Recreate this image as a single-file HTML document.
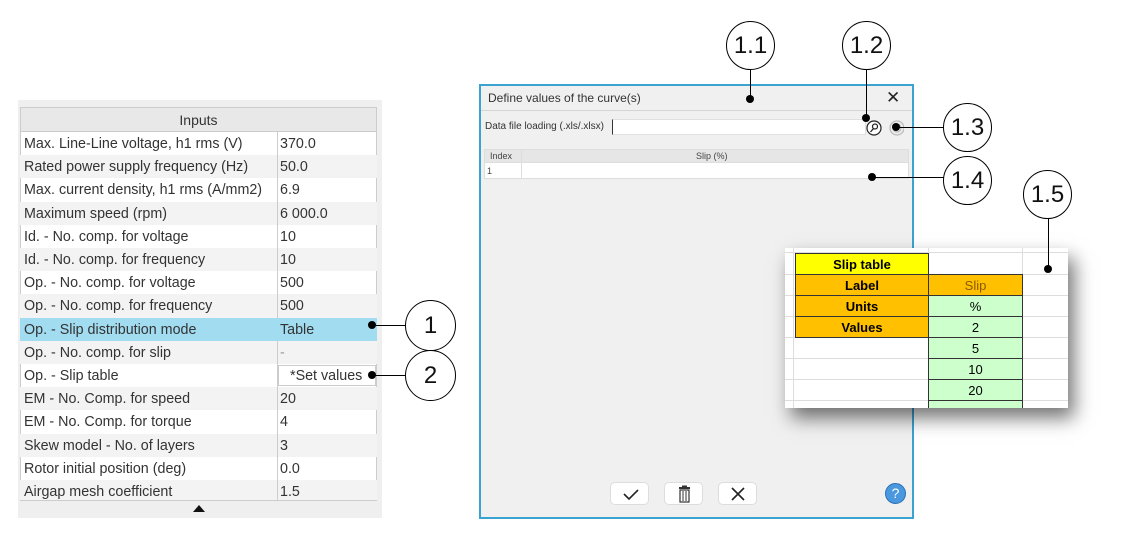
<!DOCTYPE html>
<html><head><meta charset="utf-8"><style>
*{margin:0;padding:0;box-sizing:border-box}
body{width:1125px;height:551px;background:#fff;position:relative;overflow:hidden;font-family:"Liberation Sans",sans-serif}
.a{position:absolute}
.row{position:absolute;left:20px;width:357px;height:23.2px;font-size:14.3px;color:#333;line-height:24px}
.row .l{position:absolute;left:4px;top:0}
.row .v{position:absolute;left:260px;top:0}
.row .sep{position:absolute;left:257px;top:0;width:1px;height:23.2px;background:#ccc}
.c{position:absolute;border:1.3px solid #000;border-radius:50%;background:#fff;text-align:center;font-size:24px;color:#111}
.ln{position:absolute;background:#000}
.dot{position:absolute;width:8px;height:8px;border-radius:50%;background:#000}
.xc{position:absolute;font-size:13px;text-align:center;line-height:21px;border:1px solid #333}
.btn{position:absolute;top:482px;width:39px;height:23px;background:#fff;border:1px solid #ddd;border-radius:5px}
</style></head><body>

<div class="a" style="left:18px;top:100px;width:364px;height:418px;background:#efefef"></div>
<div class="a" style="left:20px;top:107px;width:357px;height:394px;border:1px solid #ccc;background:#fff"></div>
<div class="a" style="left:21px;top:108px;width:355px;height:24px;background:#e8e8e8;border-bottom:1px solid #ccc;text-align:center;font-size:14px;line-height:25px;color:#333">Inputs</div>
<div class="row" style="top:132px"><span class="l">Max. Line-Line voltage, h1 rms (V)</span><span class="sep"></span><span class="v">370.0</span></div>
<div class="row" style="top:155.2px;background:#f3f3f3"><span class="l">Rated power supply frequency (Hz)</span><span class="sep"></span><span class="v">50.0</span></div>
<div class="row" style="top:178.4px"><span class="l">Max. current density, h1 rms (A/mm2)</span><span class="sep"></span><span class="v">6.9</span></div>
<div class="row" style="top:201.6px;background:#f3f3f3"><span class="l">Maximum speed (rpm)</span><span class="sep"></span><span class="v">6 000.0</span></div>
<div class="row" style="top:224.8px"><span class="l">Id. - No. comp. for voltage</span><span class="sep"></span><span class="v">10</span></div>
<div class="row" style="top:248px;background:#f3f3f3"><span class="l">Id. - No. comp. for frequency</span><span class="sep"></span><span class="v">10</span></div>
<div class="row" style="top:271.2px"><span class="l">Op. - No. comp. for voltage</span><span class="sep"></span><span class="v">500</span></div>
<div class="row" style="top:294.4px;background:#f3f3f3"><span class="l">Op. - No. comp. for frequency</span><span class="sep"></span><span class="v">500</span></div>
<div class="row" style="top:317.6px;background:#a2dcf1"><span class="l">Op. - Slip distribution mode</span><span class="v">Table</span></div>
<div class="row" style="top:340.8px;background:#f3f3f3"><span class="l">Op. - No. comp. for slip</span><span class="sep"></span><span class="v" style="color:#999">-</span></div>
<div class="row" style="top:364px"><span class="l">Op. - Slip table</span><span class="sep"></span><span class="a" style="left:258px;top:1px;width:98px;height:21px;border:1px solid #ccc;line-height:20px;padding-left:11px">*Set values</span></div>
<div class="row" style="top:387.2px;background:#f3f3f3"><span class="l">EM - No. Comp. for speed</span><span class="sep"></span><span class="v">20</span></div>
<div class="row" style="top:410.4px"><span class="l">EM - No. Comp. for torque</span><span class="sep"></span><span class="v">4</span></div>
<div class="row" style="top:433.6px;background:#f3f3f3"><span class="l">Skew model - No. of layers</span><span class="sep"></span><span class="v">3</span></div>
<div class="row" style="top:456.8px"><span class="l">Rotor initial position (deg)</span><span class="sep"></span><span class="v">0.0</span></div>
<div class="row" style="top:480px;background:#f3f3f3;height:20px"><span class="l">Airgap mesh coefficient</span><span class="sep" style="height:20px"></span><span class="v">1.5</span></div>
<div class="a" style="left:193px;top:505px;width:0;height:0;border-left:6px solid transparent;border-right:6px solid transparent;border-bottom:7px solid #111"></div>

<div class="dot" style="left:368px;top:321px"></div><div class="ln" style="left:372px;top:325px;width:34px;height:1px"></div>
<div class="c" style="left:405px;top:300px;width:51px;height:51px;line-height:49px">1</div>
<div class="dot" style="left:368px;top:371px"></div><div class="ln" style="left:372px;top:375px;width:34px;height:1px"></div>
<div class="c" style="left:405px;top:350px;width:51px;height:51px;line-height:49px">2</div>

<div class="a" style="left:479px;top:84px;width:435px;height:435px;border:2px solid #3ba3d2;background:#f0f0f0"></div>
<div class="a" style="left:481px;top:86px;width:431px;height:25px;border-bottom:1px solid #d5d5d5;font-size:12px;color:#333;line-height:25px;padding-left:7px">Define values of the curve(s)</div>
<div class="a" style="left:886px;top:88px;font-size:17px;color:#222">✕</div>
<div class="a" style="left:485px;top:121px;font-size:10px;color:#333">Data file loading (.xls/.xlsx)</div>
<div class="a" style="left:612px;top:119px;width:254px;height:16px;background:#fff;border:1px solid #e0e0e0;border-left:1px solid #333"></div>
<svg class="a" style="left:864px;top:118px" width="40" height="20"><circle cx="10" cy="10" r="7" fill="#fff" stroke="#222" stroke-width="1.2"/><circle cx="11" cy="8.5" r="2.5" fill="none" stroke="#222" stroke-width="1.2"/><line x1="9.5" y1="10.5" x2="6.5" y2="14" stroke="#222" stroke-width="1.3"/><circle cx="33" cy="10" r="7" fill="#eee" stroke="#bbb" stroke-width="1.3"/><circle cx="33" cy="10" r="4" fill="none" stroke="#bbb" stroke-width="1.2"/></svg>
<div class="a" style="left:484px;top:149px;width:425px;height:30px;border:1px solid #ddd;background:#fff"></div>
<div class="a" style="left:485px;top:150px;width:423px;height:13px;background:#e6e6e6;border-bottom:1px solid #ddd"></div>
<div class="a" style="left:521px;top:150px;width:1px;height:28px;background:#ddd"></div>
<div class="a" style="left:490px;top:151px;font-size:9px;color:#444">Index</div>
<div class="a" style="left:696px;top:151px;font-size:9px;color:#444">Slip (%)</div>
<div class="a" style="left:487px;top:166px;font-size:9px;color:#444">1</div>

<div class="btn" style="left:610px"><svg width="39" height="23"><path d="M13 11 l5 5 l9 -9" fill="none" stroke="#222" stroke-width="1.6"/></svg></div>
<div class="btn" style="left:664px"><svg width="39" height="23"><rect x="14" y="4" width="11" height="2" fill="#333"/><rect x="17" y="2.5" width="5" height="2" fill="#333"/><rect x="15" y="7" width="9" height="12" fill="none" stroke="#333" stroke-width="1.2"/><line x1="18" y1="8" x2="18" y2="18" stroke="#333"/><line x1="21" y1="8" x2="21" y2="18" stroke="#333"/></svg></div>
<div class="btn" style="left:718px"><svg width="39" height="23"><path d="M13 5 l12 12 M25 5 l-12 12" stroke="#222" stroke-width="1.6"/></svg></div>
<div class="a" style="left:885px;top:483px;width:21px;height:21px;border-radius:50%;background:#4a98e0;border:1px solid #2d6fb0;color:#fff;font-size:14px;text-align:center;line-height:19px">?</div>

<div class="a" style="left:785px;top:248px;width:283px;height:160px;background:#fff;box-shadow:6px 10px 18px rgba(0,0,0,.55);overflow:hidden">
  <div class="a" style="left:0;top:4px;width:283px;height:1px;background:#ddd"></div>
  <div class="a" style="left:0;top:26px;width:283px;height:1px;background:#ddd"></div>
  <div class="a" style="left:0;top:47px;width:283px;height:1px;background:#ddd"></div>
  <div class="a" style="left:0;top:68px;width:283px;height:1px;background:#ddd"></div>
  <div class="a" style="left:0;top:89px;width:283px;height:1px;background:#ddd"></div>
  <div class="a" style="left:0;top:110px;width:283px;height:1px;background:#ddd"></div>
  <div class="a" style="left:0;top:131px;width:283px;height:1px;background:#ddd"></div>
  <div class="a" style="left:0;top:152px;width:283px;height:1px;background:#ddd"></div>
  <div class="a" style="left:8px;top:0;width:1px;height:160px;background:#ddd"></div>
  <div class="a" style="left:143px;top:0;width:1px;height:160px;background:#ddd"></div>
  <div class="a" style="left:237px;top:0;width:1px;height:160px;background:#ddd"></div>
  <div class="xc" style="left:10px;top:5px;width:134px;height:22px;background:#ffff00;font-weight:bold">Slip table</div>
  <div class="xc" style="left:10px;top:26px;width:134px;height:22px;background:#ffc000;font-weight:bold">Label</div>
  <div class="xc" style="left:10px;top:47px;width:134px;height:22px;background:#ffc000;font-weight:bold">Units</div>
  <div class="xc" style="left:10px;top:68px;width:134px;height:22px;background:#ffc000;font-weight:bold">Values</div>
  <div class="xc" style="left:143px;top:26px;width:95px;height:22px;background:#ffc000;color:#8a5a00">Slip</div>
  <div class="xc" style="left:143px;top:47px;width:95px;height:22px;background:#ccffcc">%</div>
  <div class="xc" style="left:143px;top:68px;width:95px;height:22px;background:#ccffcc">2</div>
  <div class="xc" style="left:143px;top:89px;width:95px;height:22px;background:#ccffcc">5</div>
  <div class="xc" style="left:143px;top:110px;width:95px;height:22px;background:#ccffcc">10</div>
  <div class="xc" style="left:143px;top:131px;width:95px;height:22px;background:#ccffcc">20</div>
  <div class="xc" style="left:143px;top:152px;width:95px;height:22px;background:#ccffcc"></div>
</div>

<div class="c" style="left:726px;top:21px;width:49px;height:49px;line-height:47px">1.1</div>
<div class="ln" style="left:750px;top:69px;width:1px;height:30px"></div><div class="dot" style="left:746px;top:95px"></div>
<div class="c" style="left:842px;top:21px;width:49px;height:49px;line-height:47px">1.2</div>
<div class="ln" style="left:866px;top:69px;width:1px;height:48px"></div><div class="dot" style="left:862px;top:114px"></div>
<div class="ln" style="left:896px;top:127px;width:48px;height:1px"></div><div class="dot" style="left:892px;top:123px"></div>
<div class="c" style="left:943px;top:103px;width:49px;height:49px;line-height:47px">1.3</div>
<div class="ln" style="left:873px;top:177px;width:71px;height:1px"></div><div class="dot" style="left:868px;top:173px"></div>
<div class="c" style="left:943px;top:156px;width:49px;height:49px;line-height:47px">1.4</div>
<div class="c" style="left:1023px;top:170px;width:49px;height:49px;line-height:47px">1.5</div>
<div class="ln" style="left:1048px;top:218px;width:1px;height:50px"></div><div class="dot" style="left:1044px;top:265px"></div>
</body></html>
